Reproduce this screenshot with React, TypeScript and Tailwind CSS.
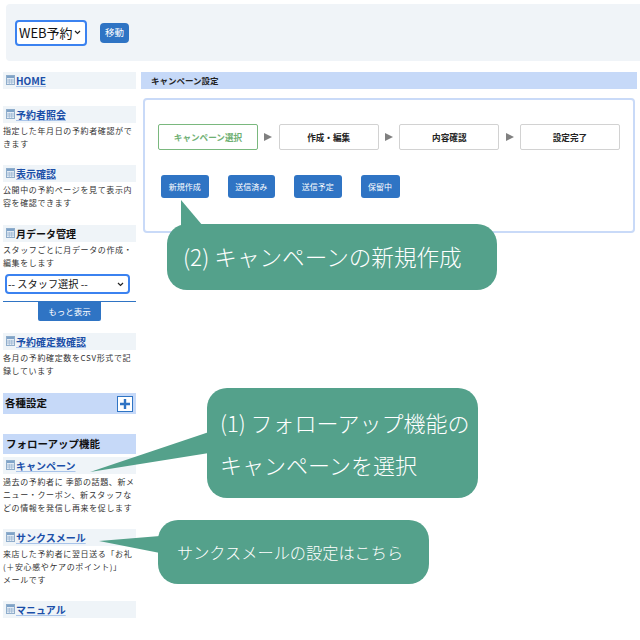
import React from "react";

function GridIcon() {
  return (
    <svg width="9" height="10" viewBox="0 0 9 10" className="shrink-0 -mt-[1px] mr-[1px]">
      <rect x="0.5" y="0.5" width="8" height="9" fill="#e3ebf4" stroke="#8fadcb" />
      <rect x="1" y="1" width="7" height="2" fill="#7fa3c8" />
      <path d="M1 5H8M1 7H8M3.3 4V9.5M5.7 4V9.5" stroke="#9db8d3" strokeWidth="0.8" />
    </svg>
  );
}

function Head({ label, link = true, className = "" }: { label: string; link?: boolean; className?: string }) {
  return (
    <div className={"h-[17px] bg-[#eff4f8] flex items-center pl-[3px] " + className}>
      <GridIcon />
      <span
        className={
          link
            ? "text-[10px] font-bold text-[#1b4fa8] underline decoration-[#a9c4ea] underline-offset-1 leading-none"
            : "text-[10px] font-bold text-[#111] leading-none"
        }
      >
        {label}
      </span>
    </div>
  );
}

function Desc({ lines }: { lines: string[] }) {
  return (
    <div className="mt-[1px] text-[8px] tracking-[0.62px] leading-[13px] text-[#333] whitespace-nowrap">
      {lines.map((l) => (
        <div key={l}>{l}</div>
      ))}
    </div>
  );
}

function Step({ label, active }: { label: string; active?: boolean }) {
  return (
    <div
      className={
        "w-[100px] h-[26px] shrink-0 rounded-[2px] bg-white border-[1.5px] flex items-center justify-center text-[8.6px] font-bold " +
        (active ? "border-[#7ab87e] text-[#6fb073]" : "border-[#d2d2d2] text-[#222]")
      }
    >
      {label}
    </div>
  );
}

function Arrow() {
  return <div className="w-0 h-0 shrink-0 border-y-[4px] border-y-transparent border-l-[8px] border-l-[#808080]" />;
}

function Btn({ label, w }: { label: string; w: string }) {
  return (
    <div className={"h-[23px] rounded-[3px] bg-[#2f74c4] text-white text-[8px] flex items-center justify-center " + w}>
      {label}
    </div>
  );
}

export default function App() {
  return (
    <div className="relative w-[640px] h-[640px] overflow-hidden bg-white font-['Noto_Sans_CJK_JP',sans-serif]">
      <div className="ml-[6px] mt-[4px] h-[57px] rounded-l-[4px] bg-[#f0f4f8] flex items-center pl-[9px] gap-[13px]">
        <div className="w-[72px] h-[26px] rounded-[4px] border-2 border-[#3b82f0] bg-white flex items-center pl-[2px] pr-[4px] justify-between">
          <span className="text-[13px] text-[#111] whitespace-nowrap leading-none">WEB予約</span>
          <svg width="7" height="5" viewBox="0 0 7 5">
            <path d="M1 1L3.5 3.5L6 1" fill="none" stroke="#222" strokeWidth="1.2" />
          </svg>
        </div>
        <div className="w-[29px] h-[20px] rounded-[4px] bg-[#2f74c4] text-white text-[9.5px] flex items-center justify-center">
          移動
        </div>
      </div>

      <div className="flex mt-[11px] items-start">
        <aside className="ml-[3px] w-[133px] shrink-0">
          <Head label="HOME" />
          <Head label="予約者照会" className="mt-[17px]" />
          <Desc lines={["指定した年月日の予約者確認がで", "きます"]} />
          <Head label="表示確認" className="mt-[15px]" />
          <Desc lines={["公開中の予約ページを見て表示内", "容を確認できます"]} />
          <Head label="月データ管理" link={false} className="mt-[16px]" />
          <Desc lines={["スタッフごとに月データの作成・", "編集をします"]} />
          <div className="ml-[2px] mt-[5px] w-[125px] h-[20px] rounded-[4px] border-2 border-[#3b82f0] bg-white flex items-center justify-between pl-[1px] pr-[4px]">
            <span className="text-[10.2px] text-[#111] leading-none whitespace-nowrap">-- スタッフ選択 --</span>
            <svg width="7" height="5" viewBox="0 0 7 5">
              <path d="M1 1L3.5 3.5L6 1" fill="none" stroke="#222" strokeWidth="1.2" />
            </svg>
          </div>
          <div className="mt-[7px] border-t border-[#2f74c4] flex justify-center">
            <div className="w-[63px] h-[19px] rounded-b-[2px] bg-[#2f74c4] text-white text-[8.5px] flex items-center justify-center">
              もっと表示
            </div>
          </div>
          <Head label="予約確定数確認" className="mt-[12px]" />
          <Desc lines={["各月の予約確定数をCSV形式で記", "録しています"]} />
          <div className="mt-[16px] h-[21px] bg-[#c6d9f8] flex items-center justify-between pl-[2px] pr-[3px]">
            <span className="text-[10.5px] font-bold text-[#111] leading-none">各種設定</span>
            <div className="w-[16px] h-[16px] border-[1.5px] border-[#2f74c4] bg-white flex items-center justify-center">
              <svg width="12" height="12" viewBox="0 0 12 12">
                <path d="M6 1V11M1 6H11" stroke="#2f74c4" strokeWidth="2.4" />
              </svg>
            </div>
          </div>
          <div className="mt-[20px] h-[20px] bg-[#c6d9f8] flex items-center pl-[3px]">
            <span className="text-[10.5px] font-bold text-[#111] leading-none">フォローアップ機能</span>
          </div>
          <Head label="キャンペーン" className="mt-[3px]" />
          <Desc lines={["過去の予約者に 季節の話題、新メ", "ニュー・クーポン、新スタッフな", "どの情報を発信し再来を促します"]} />
          <Head label="サンクスメール" className="mt-[15px]" />
          <Desc lines={["来店した予約者に翌日送る「お礼", "(＋安心感やケアのポイント)」", "メールです"]} />
          <Head label="マニュアル" className="mt-[15px]" />
        </aside>

        <main className="ml-[5px] w-[496px] shrink-0">
          <div className="h-[17px] bg-[#c6d9f8] flex items-center pl-[10px] text-[8.5px] font-bold text-[#222]">
            キャンペーン設定
          </div>
          <div className="mt-[9px] ml-[2px] w-[492px] h-[135px] rounded-[4px] border-2 border-[#c9daf8] bg-white pt-[24px] pl-[13px]">
            <div className="flex items-center gap-[6.33px]">
              <Step label="キャンペーン選択" active />
              <Arrow />
              <Step label="作成・編集" />
              <Arrow />
              <Step label="内容確認" />
              <Arrow />
              <Step label="設定完了" />
            </div>
            <div className="mt-[25px] ml-[3px] flex gap-[19px]">
              <Btn label="新規作成" w="w-[47.5px]" />
              <Btn label="送信済み" w="w-[47.5px]" />
              <Btn label="送信予定" w="w-[47.5px]" />
              <Btn label="保留中" w="w-[39px]" />
            </div>
          </div>
        </main>
      </div>

      <svg width="640" height="640" viewBox="0 0 640 640" className="absolute left-0 top-0 pointer-events-none">
        <path d="M181 200V226H203Z" fill="#54a18b" />
        <path d="M209 432L90 472L209 453Z" fill="#54a18b" />
        <path d="M160 536L99 541L160 553Z" fill="#54a18b" />
      </svg>

      <div className="absolute left-[167px] top-[224px] w-[330px] h-[66px] rounded-[20px] bg-[#54a18b] text-white text-[22.6px] font-light leading-[66px] pl-[16px] whitespace-nowrap">
        (2) キャンペーンの新規作成
      </div>
      <div className="absolute left-[207px] top-[388px] w-[271px] h-[110px] rounded-[20px] bg-[#54a18b] text-white text-[22px] font-light leading-[42px] pl-[13px] pt-[13px] whitespace-nowrap">
        <div>(1) フォローアップ機能の</div>
        <div>キャンペーンを選択</div>
      </div>
      <div className="absolute left-[158px] top-[520px] w-[271px] h-[64px] rounded-[20px] bg-[#54a18b] text-white text-[16.2px] font-light leading-[64px] pl-[19px] whitespace-nowrap">
        サンクスメールの設定はこちら
      </div>
    </div>
  );
}
